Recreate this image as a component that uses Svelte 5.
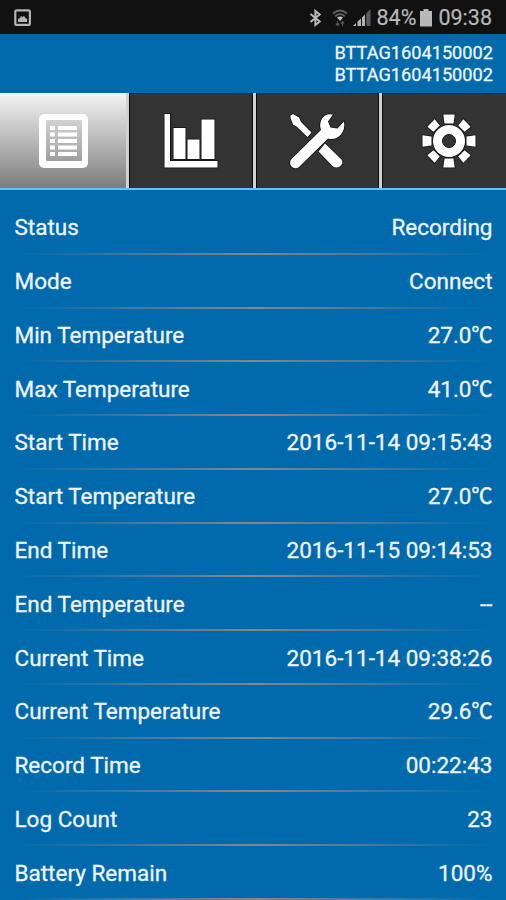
<script>
    let activeTab = 'list';

    const tabs = ['list', 'chart', 'tools', 'settings'];
    const teeth = [0, 90, 180, 270];

    const device = {
        name: 'BTTAG1604150002',
        serial: 'BTTAG1604150002'
    };

    const rows = [
        { label: 'Status', value: 'Recording' },
        { label: 'Mode', value: 'Connect' },
        { label: 'Min Temperature', value: '27.0', unit: '℃' },
        { label: 'Max Temperature', value: '41.0', unit: '℃' },
        { label: 'Start Time', value: '2016-11-14 09:15:43' },
        { label: 'Start Temperature', value: '27.0', unit: '℃' },
        { label: 'End Time', value: '2016-11-15 09:14:53' },
        { label: 'End Temperature', value: '--' },
        { label: 'Current Time', value: '2016-11-14 09:38:26' },
        { label: 'Current Temperature', value: '29.6', unit: '℃' },
        { label: 'Record Time', value: '00:22:43' },
        { label: 'Log Count', value: '23' },
        { label: 'Battery Remain', value: '100%' }
    ];
</script>

<div class="screen">
    <div class="statusbar">
        <svg class="picture" width="18" height="18" viewBox="0 0 18 18">
            <rect x="1.3" y="1.3" width="14.6" height="14.6" rx="1.5" fill="none" stroke="#b4b4b4" stroke-width="2.2" />
            <path d="M4 13V10l2-1 1-2 1.5 1L10 7l1.5 2 1.7 1v3z" fill="#b4b4b4" />
        </svg>
        <div class="indicators">
            <svg class="bluetooth" width="13" height="18" viewBox="0 0 13 18">
                <path d="M1.5 5l9.2 7.5L6.4 16V2l4.3 3.5L1.5 13" fill="none" stroke="#b8b8b8" stroke-width="2" />
            </svg>
            <svg class="wifi" width="16" height="18" viewBox="0 0 16 18">
                <path d="M1 4.5Q8-1.5 15 4.5M3.2 7.2Q8 3 12.8 7.2" fill="none" stroke="#626262" stroke-width="1.8" />
                <path d="M5 8.5q3-2 6 0L8 12z" fill="#c0c0c0" />
                <path d="M5.5 12v4M3.8 14.5l1.7 2 1.7-2M10.5 17v-4M8.8 14.5l1.7-2 1.7 2" fill="none" stroke="#555" stroke-width="1.2" />
            </svg>
            <svg class="signal" width="18" height="18" viewBox="0 0 18 18">
                <path d="M0 17l3-3v3zM4.5 12.5L8 9.5V17H4.5zM9 8.5l3-3V17H9z" fill="#b4b4b4" />
                <path d="M13.2 4.5L17.5 0v17h-4.3z" fill="#5b5b5b" />
            </svg>
            <span class="percent">84%</span>
            <svg class="battery" width="12" height="18" viewBox="0 0 12 18">
                <path d="M3.5 0h5v2H12v15.5H0V2h3.5z" fill="#b8b8b8" />
            </svg>
            <span class="clock">09:38</span>
        </div>
    </div>

    <header>
        <div>{device.name}</div>
        <div>{device.serial}</div>
    </header>

    <nav>
        {#each tabs as tab}
            <button class="tab" class:active={tab === activeTab} aria-label={tab} on:click={() => (activeTab = tab)}>
                <svg width="60" height="60" viewBox="0 0 60 60">
                    {#if tab === 'list'}
                        <path fill-rule="evenodd" d="M10 3h39a5 5 0 0 1 5 5v44a5 5 0 0 1-5 5H10a5 5 0 0 1-5-5V8a5 5 0 0 1 5-5zM12 9v41h36V9z" />
                        {#each [15, 21.5, 28, 34.5, 41] as y}
                            <rect x="16" {y} width="5" height="4" />
                            <rect x="24" {y} width="19" height="4" />
                        {/each}
                    {:else if tab === 'chart'}
                        <path class="outlined" d="M3.5 3H9v47h47.5v6.5h-53z" />
                        <rect class="outlined" x="12.5" y="17" width="12" height="31" />
                        <rect class="outlined" x="26.5" y="28.5" width="12" height="19.5" />
                        <rect class="outlined" x="40.5" y="8.5" width="13" height="39.5" />
                    {:else if tab === 'tools'}
                        <path class="outlined" d="M3.5 4.5L6 3L12 6.5L14 11L24.5 21.5L20.5 26L9.5 15.5L6 13.5L3.5 7z" />
                        <path class="outlined" d="M38 32.5L54.5 48.5A5 5 0 0 1 53 55.5Q49 57.5 46 55.5L31.5 40.5z" />
                        <path class="outlined" d="M46 3.5Q38 2 34.5 8.5Q32 14 34 19L4.5 48A5.5 5.5 0 0 0 12 56L41 27.5Q48 29.5 53.5 24Q58.5 18.5 57 10.5L50.5 17.5L43.5 16.5L41 10.5z" />
                    {:else}
                        {#each teeth as angle}
                            <g transform="rotate({angle} 30 30)">
                                <path class="outlined" d="M24.3 3.5h11.4l-1.2 9h-9z" />
                                <path class="outlined" transform="rotate(45 30 30)" d="M24.8 4.5h10.4l-0.7 8h-9z" />
                            </g>
                        {/each}
                        <circle class="outlined" cx="30" cy="30" r="16" />
                        <circle cx="30" cy="30" r="6.5" class="hole" />
                    {/if}
                </svg>
            </button>
        {/each}
    </nav>

    <main>
        {#each rows as row}
            <div class="row">
                <span class="label">{row.label}</span>
                <span class="value">{row.value}{#if row.unit}<span class="unit">{row.unit}</span>{/if}</span>
            </div>
        {/each}
    </main>
</div>

<style>
    :global(body) {
        margin: 0;
        background: #006aad;
    }
    .screen {
        display: flex;
        flex-direction: column;
        width: 506px;
        height: 900px;
        overflow: hidden;
        background: #006aad;
        color: #f0f5ff;
        font-family: Roboto, "Noto Sans CJK SC", sans-serif;
    }
    .statusbar {
        display: flex;
        flex: none;
        justify-content: space-between;
        align-items: center;
        box-sizing: border-box;
        height: 34px;
        padding: 2px 14px 0;
        background: #111;
        border-bottom: 1px solid #001323;
        color: #b8b8b8;
        font-size: 21.5px;
        -webkit-text-stroke: 0.2px;
    }
    .indicators {
        display: flex;
        align-items: center;
    }
    .bluetooth {
        margin-right: 10px;
    }
    .wifi {
        margin-right: 5px;
    }
    .signal {
        margin-right: 6px;
    }
    .battery {
        margin: 0 6px 0 4px;
    }
    header {
        flex: none;
        box-sizing: border-box;
        height: 59px;
        padding: 8px 13px 0 0;
        text-align: right;
        font-size: 18.2px;
        line-height: 21.5px;
        -webkit-text-stroke: 0.3px;
    }
    nav {
        display: grid;
        flex: none;
        grid-template-columns: 129px 126.5px 126.5px 124px;
        height: 95px;
        border-bottom: 2px solid #68c0ef;
    }
    .tab {
        display: flex;
        align-items: center;
        justify-content: center;
        padding: 0;
        border: 0;
        border-right: 3px solid #d0d2d4;
        background: #333;
        box-shadow: inset 1px 0 #080808, inset -1px 0 #080808, inset 0 1px #262626;
    }
    .tab:last-child {
        border-right: 0;
        padding-left: 9px;
        box-shadow: inset 1px 0 #080808, inset 0 1px #262626;
    }
    .tab.active {
        padding-left: 2px;
        background: linear-gradient(#f4f4f4, #7d7d7d);
        box-shadow: inset 0 1px #fff;
    }
    .tab svg {
        flex: none;
        fill: #fff;
    }
    .outlined {
        stroke: #111;
        stroke-width: 1.5;
        paint-order: stroke;
    }
    .tab .hole {
        fill: #333;
        stroke: #151515;
        stroke-width: 1;
    }
    main {
        padding-top: 11px;
    }
    .row {
        display: flex;
        justify-content: space-between;
        align-items: center;
        box-sizing: border-box;
        height: 53.77px;
        margin: 0 13.5px 0 14.5px;
        padding-bottom: 1px;
        font-size: 22.5px;
        line-height: 26px;
        -webkit-text-stroke: 0.3px;
        background: linear-gradient(90deg, #88868c00, #88868c 50%, #88868c00) bottom / 100% 2px no-repeat;
    }
    .unit {
        font-size: 21px;
        line-height: 1;
        vertical-align: 1px;
        -webkit-text-stroke: 0.5px;
    }
</style>
